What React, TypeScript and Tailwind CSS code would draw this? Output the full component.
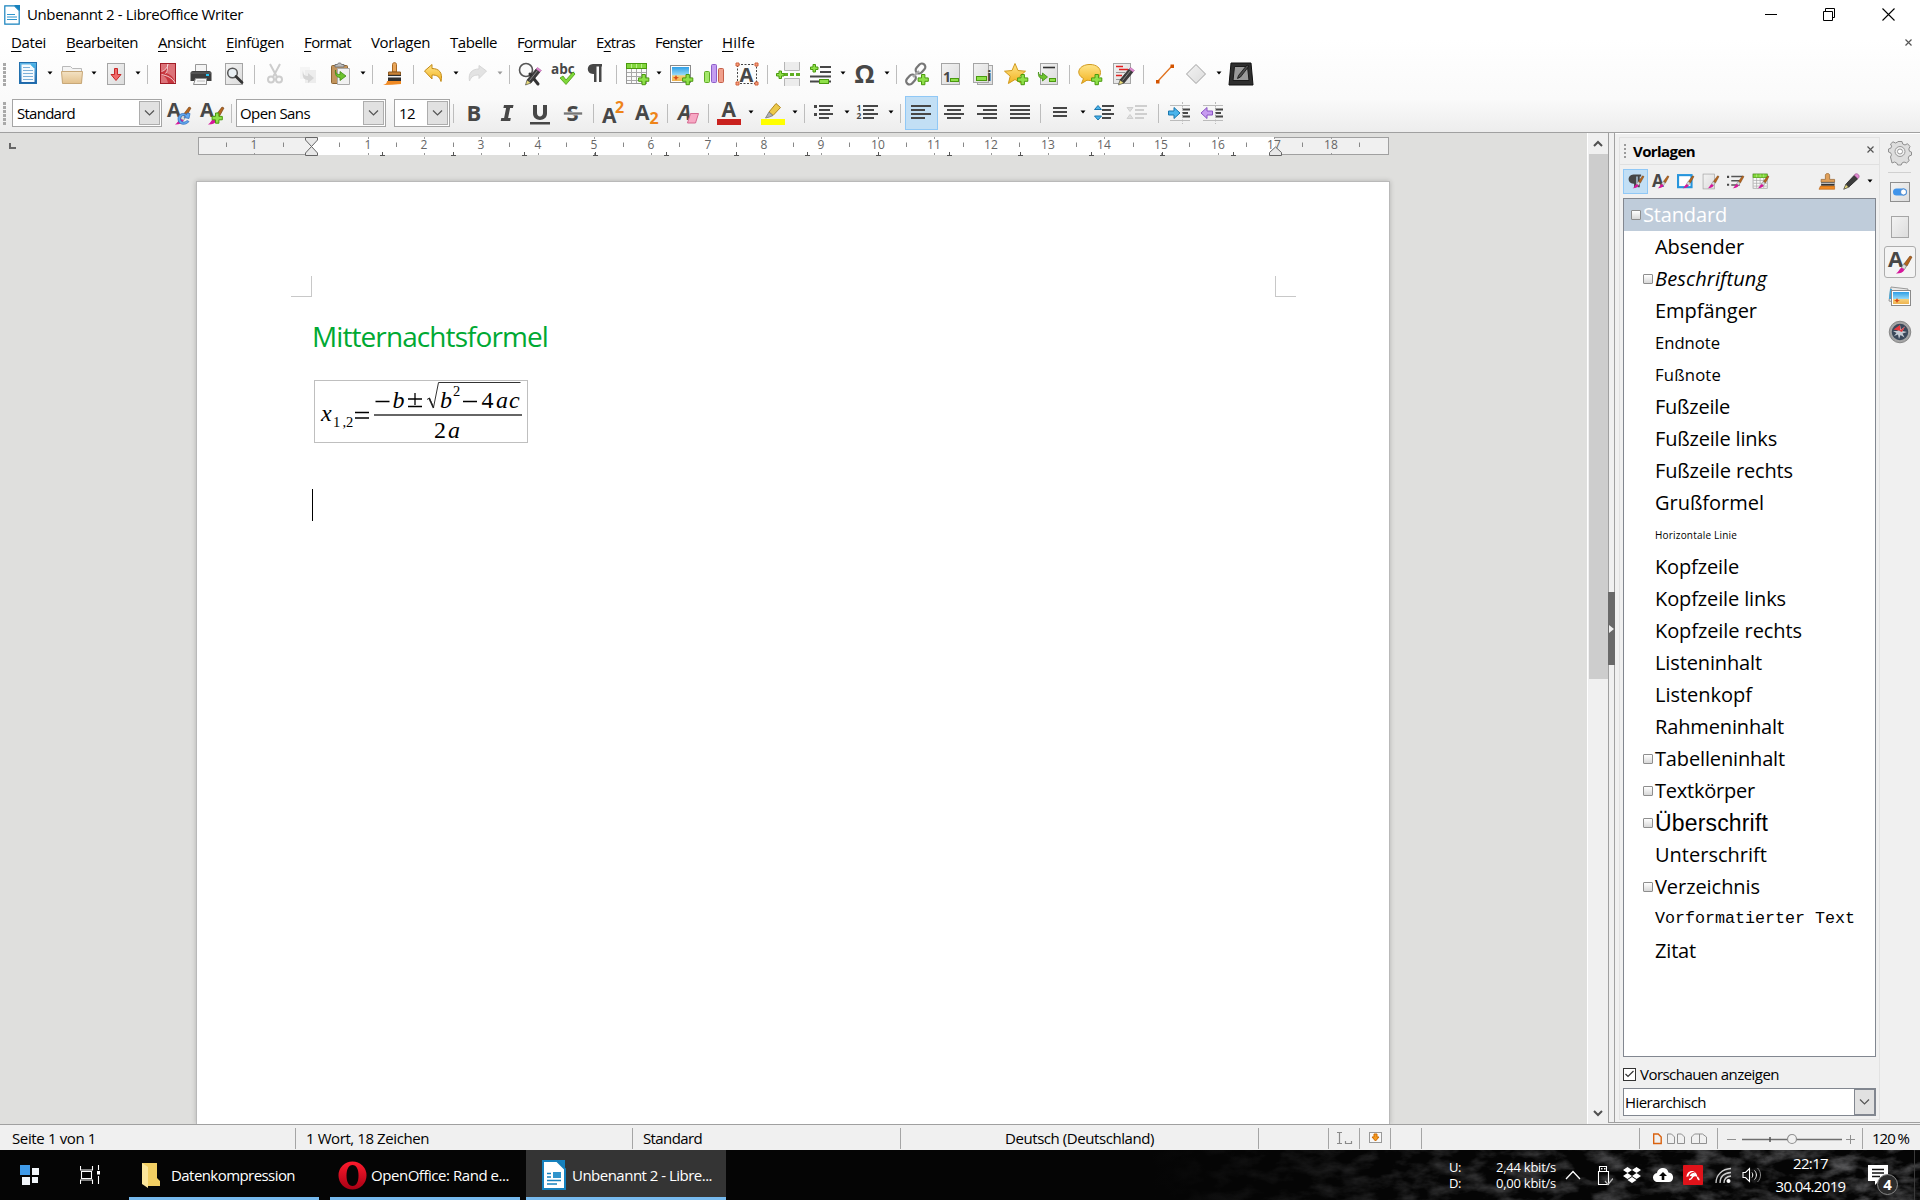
import { useLayoutEffect, useRef } from "react";
import type { ReactNode } from "react";
import clsx from "clsx";

/* ---------- text ---------- */

// Single line label that tracks itself to an exact width
function Fit({ w, className, children }: { w: number; className?: string; children: ReactNode }) {
    const ref = useRef<HTMLSpanElement>(null);

    useLayoutEffect(() => {
        const el = ref.current;
        if (!el) return;
        el.style.letterSpacing = "0px";
        const n = (el.textContent ?? "").length || 1;
        el.style.letterSpacing = `${(w - el.getBoundingClientRect().width) / n}px`;
    }, [w]);

    return (
        <span ref={ref} className={clsx("inline-block whitespace-pre", className)}>
            {children}
        </span>
    );
}

/* ---------- icon parts ---------- */

function Ico({ children, s = 24 }: { children: ReactNode; s?: number }) {
    return (
        <svg width={s} height={s} viewBox="0 0 24 24" fill="none" className="shrink-0 overflow-visible">
            {children}
        </svg>
    );
}

const Plus = ({ x, y }: { x: number; y: number }) => (
    <path transform={`translate(${x} ${y})`} d="M4 .5h3.400v3.400h3.400v3.400H7.400v3.400H4V7.300H.6V3.900H4z" fill="#8fe04a" stroke="#4a9a0e" />
);

const Letter = ({ x, y, size, children, fill = "#474747", italic = false }: { x: number; y: number; size: number; children: string; fill?: string; italic?: boolean }) => (
    <text x={x} y={y} fontSize={size} fontWeight={700} fontFamily="Open Sans, sans-serif" fontStyle={italic ? "italic" : "normal"} fill={fill}>
        {children}
    </text>
);

// Small paint brush laid over the style icons
const Brush = ({ x = 0, y = 0 }: { x?: number; y?: number }) => (
    <g transform={`translate(${x} ${y})`}>
        <path d="M22 4l2 1-5 9-3-2z" fill="#b5651d" stroke="#6b3a10" strokeWidth=".6" />
        <path d="M15.500 12l3 2-2 3.500-3-2z" fill="#ddd" stroke="#777" strokeWidth=".7" />
        <path d="M13.500 15.500l3 2.200c-1.500 3-5 4-8.500 3.800 2.500-1 3-4.500 5.500-6z" fill="#d6179b" />
    </g>
);

const Lines = ({ x = 2, ws, y = 5, gap = 4, color = "#474747" }: { x?: number; ws: number[]; y?: number; gap?: number; color?: string }) => (
    <>
        {ws.map((w, i) => (
            <rect key={i} x={x} y={y + i * gap} width={w} height="2" fill={color} />
        ))}
    </>
);

const Sheet = ({ x = 3, y = 1, w = 18, h = 22 }: { x?: number; y?: number; w?: number; h?: number }) => (
    <rect x={x + 0.5} y={y + 0.5} width={w - 1} height={h - 1} fill="url(#sheet)" stroke="#a5a5a5" />
);

const Grid = () => (
    <>
        <rect x="1.500" y="1.500" width="20" height="20" fill="#fafafa" stroke="#999" />
        <path d="M2 10.500h19M2 14.500h19M2 18.500h19M6.500 6v15M11.500 6v15M16.500 6v15" stroke="#a8a8a8" />
        <rect x="1.500" y="1.500" width="20" height="5" fill="#82d63c" stroke="#4a9a0e" />
        <path d="M6.500 2v4M11.500 2v4M16.500 2v4" stroke="#b9f08b" />
    </>
);

const Pencil = () => (
    <g>
        <path d="M9 18l9-11 4 3-9 11z" fill="#3c3c3c" stroke="#1e1e1e" strokeWidth=".6" />
        <path d="M9 18l4 3-5.500 2z" fill="#eadc7a" stroke="#333" strokeWidth=".6" />
        <path d="M18 7l1.500-1.500 4 3L22 10z" fill="#e28bd2" stroke="#9a4f8c" strokeWidth=".5" />
        <path d="M11.500 18.500l8-10" stroke="#8a8a8a" />
    </g>
);

function Defs() {
    return (
        <svg width="0" height="0" className="absolute">
            <defs>
                <linearGradient id="sheet" x1="0" y1="0" x2="1" y2="1">
                    <stop offset="0" stopColor="#f3f3f3" />
                    <stop offset="1" stopColor="#dcdcdc" />
                </linearGradient>
                <linearGradient id="blue" x1="0" y1="0" x2="0" y2="1">
                    <stop offset="0" stopColor="#5db7e8" />
                    <stop offset="1" stopColor="#1d62a8" />
                </linearGradient>
                <linearGradient id="tan" x1="0" y1="0" x2="0" y2="1">
                    <stop offset="0" stopColor="#f3e2c4" />
                    <stop offset="1" stopColor="#e3c18c" />
                </linearGradient>
                <linearGradient id="gold" x1="0" y1="0" x2="0" y2="1">
                    <stop offset="0" stopColor="#ffe58a" />
                    <stop offset="1" stopColor="#f2b21f" />
                </linearGradient>
                <linearGradient id="sky" x1="0" y1="0" x2="0" y2="1">
                    <stop offset="0" stopColor="#2f9fe6" />
                    <stop offset=".6" stopColor="#9adcf7" />
                    <stop offset=".61" stopColor="#f5cf7a" />
                    <stop offset="1" stopColor="#eeb44f" />
                </linearGradient>
                <linearGradient id="opera" x1="0" y1="0" x2="0" y2="1">
                    <stop offset="0" stopColor="#ff1b2d" />
                    <stop offset="1" stopColor="#a70014" />
                </linearGradient>
            </defs>
        </svg>
    );
}

/* ---------- standard toolbar icons ---------- */

const icons: Record<string, ReactNode> = {
    new: (
        <Ico>
            <rect x="3.500" y=".5" width="17" height="21" fill="url(#blue)" stroke="#2170ae" />
            <path d="M5.500 2.500h9l4 4v13.500h-13z" fill="#f4fafe" />
            <path d="M14.500 2.500h4v4z" fill="#3fb2e6" />
            <path d="M7 5.500h7M7 8.500h10M7 11.500h10M7 14.500h10M7 17.500h10" stroke="#7bb0d8" strokeWidth="1.200" />
        </Ico>
    ),
    open: (
        <Ico>
            <path d="M2.500 21V4.500h8l2 2h9V21z" fill="#f4f4f4" stroke="#b9b9b9" />
            <path d="M1.500 9.500h21l-1 12h-19z" fill="url(#tan)" stroke="#c8a878" />
        </Ico>
    ),
    save: (
        <Ico>
            <Sheet x={3} y={1} w={18} h={22} />
            <path d="M10.500 6.500h3v6h3.500l-5 6-5-6h3.500z" fill="#ef6a6a" stroke="#c62828" />
        </Ico>
    ),
    pdf: (
        <Ico>
            <rect x="4.500" y="1.500" width="15" height="20" fill="#c8373f" stroke="#a11d27" />
            <path d="M5 2h6c0 4-2 6-6 7zM13 2h6v19c-1-5-3-8-9-10 2-2 3-5 3-9zM5 13c4 1 6 3 7 8H5z" fill="#dd7379" />
            <path d="M5.500 9.500C9 8.500 11.500 6 12 2M5.500 12.500c5 1 11 3 13.500 8.500M12 2c-.5 4 0 7-2.500 9.500" stroke="#fff" strokeWidth=".9" opacity=".85" />
        </Ico>
    ),
    print: (
        <Ico>
            <path d="M6.500 10V2.500h11V10" fill="#f4f4f4" stroke="#999" />
            <path d="M4 9h16c2 0 2.500 1.500 2.500 3v7h-21v-7c0-1.500.5-3 2.500-3z" fill="#3d3d3d" />
            <path d="M1.500 11h21" stroke="#6a6a6a" />
            <rect x="17" y="12" width="3" height="2" fill="#25c4f4" />
            <path d="M6.500 16.500h11v6h-13z" fill="#f7f7f7" stroke="#8d8d8d" />
            <path d="M8 19h8" stroke="#bbb" />
        </Ico>
    ),
    preview: (
        <Ico>
            <Sheet x={3} y={1} w={18} h={22} />
            <circle cx="10.500" cy="11" r="4.800" fill="#e9eff3" stroke="#555" strokeWidth="1.500" />
            <path d="M14 14.500l6 6" stroke="#333" strokeWidth="2.800" strokeLinecap="round" />
        </Ico>
    ),
    cut: (
        <Ico>
            <g stroke="#cdcdcd" strokeWidth="2">
                <path d="M7 2l7 13M17 2l-7 13" />
                <circle cx="8" cy="17.500" r="3" />
                <circle cx="16" cy="17.500" r="3" />
            </g>
        </Ico>
    ),
    copy: (
        <Ico>
            <path d="M4 5h10v12H4z" fill="#f5f5f5" />
            <path d="M9 8h11v13H9z" fill="#ededed" />
            <path d="M7 8c0 5 2 6 5 6v-3l6 5-6 5v-3c-5 0-6-4-5-10z" fill="#d6d6d6" />
        </Ico>
    ),
    paste: (
        <Ico>
            <rect x="2.500" y="3.500" width="16" height="18" rx="1" fill="#c2945c" stroke="#8c6432" />
            <path d="M6 5V2.500h2.500c0-2 4-2 4 0H15V5z" fill="#bdbdbd" stroke="#777" />
            <path d="M8.500 6.500h12v16h-12z" fill="#f1f1f1" stroke="#aaa" />
            <path d="M6.500 8c0 4 2 4.500 4.500 4.500V9.500l6 4.500-6 4.500v-3C7 15.500 6 12 6.500 8z" fill="#6cc32e" stroke="#3f8a12" strokeWidth=".8" />
        </Ico>
    ),
    clone: (
        <Ico>
            <path d="M11.500 10V2.500c0-2.500 4-2.500 4 0V10z" fill="#e8a55a" stroke="#a8661f" />
            <path d="M7.500 10h12v3h-12z" fill="#c98237" stroke="#8c5a22" />
            <path d="M7 13h13v6H7z" fill="#2f2f2f" />
            <path d="M7 14h13v1.500H7z" fill="#ececec" />
            <path d="M6 19h14v3c-6 .5-12 1-18 1 3-.8 4-2 4-4z" fill="#f08a24" />
        </Ico>
    ),
    undo: (
        <Ico>
            <path d="M2.500 9l7.500-6.500v4c7 0 11 4 9 13-1.500-5-4-6.500-9-6.500v4z" fill="url(#gold)" stroke="#c38a17" />
        </Ico>
    ),
    redo: (
        <Ico>
            <path d="M20.500 9L13 3.500v3.500C6 7 2 11 3.500 19c2-5 4.500-6 9.500-6v3.500z" fill="#e3e3e3" stroke="#d6d6d6" />
        </Ico>
    ),
    find: (
        <Ico>
            <circle cx="8" cy="8" r="6.500" fill="#fafafa" stroke="#555" strokeWidth="1.600" />
            <path d="M12 12l8 10" stroke="#333" strokeWidth="3" strokeLinecap="round" />
            <Pencil />
        </Ico>
    ),
    spell: (
        <Ico>
            <Letter x={0} y={12} size={13.5}>abc</Letter>
            <path d="M9 16l3-2 3 4 7-8 2 2-9 10.500z" fill="#7fd83a" stroke="#4a9a0e" strokeWidth=".8" />
        </Ico>
    ),
    pilcrow: (
        <Ico>
            <path d="M18 2H9C2 2 2 12 9 12h1v8h2.500V4.500H15V20h2.500V4.500H18z" fill="#474747" />
        </Ico>
    ),
    table: (
        <Ico>
            <Grid />
            <Plus x={13} y={12} />
        </Ico>
    ),
    image: (
        <Ico>
            <rect x="1.500" y="3.500" width="20" height="17" fill="#fff" stroke="#8a8a8a" />
            <rect x="3" y="5" width="17" height="14" fill="url(#sky)" />
            <path d="M7 13l1 2 2 .5-2 1-1 2-1-2-2-1 2-.5z" fill="#d84a16" />
            <Plus x={13} y={12} />
        </Ico>
    ),
    chart: (
        <Ico>
            <rect x="2.500" y="9.500" width="5" height="11" rx="1" fill="#a4e86a" stroke="#5faa25" />
            <rect x="9.500" y="2.500" width="5" height="18" rx="1" fill="#c49df0" stroke="#8d5fc9" />
            <rect x="16.500" y="6.500" width="5" height="14" rx="1" fill="#f0a08c" stroke="#c5604a" />
        </Ico>
    ),
    frame: (
        <Ico>
            <rect x="2.500" y="2.500" width="19" height="19" stroke="#444" strokeDasharray="2 1.500" />
            <Letter x={4.5} y={19.5} size={20}>A</Letter>
            <path d="M1 1h3v3H1zM20 1h3v3h-3zM1 20h3v3H1zM20 20h3v3h-3z" fill="#f7a080" stroke="#d2603a" />
        </Ico>
    ),
    pagebreak: (
        <Ico>
            <path d="M8.500 0v8.500h15V0M8.500 24v-7.500h15V24" fill="#ececec" stroke="#b5b5b5" />
            <path d="M8 12.500h16" stroke="#5fae22" strokeWidth="3" strokeDasharray="4 2" />
            <path d="M3 9h2.500v2.500H8V14H5.500v2.500H3V14H.5v-2.500H3z" fill="#8fe04a" stroke="#4a9a0e" />
        </Ico>
    ),
    field: (
        <Ico>
            <Lines x={11} ws={[11, 11]} y={4} gap={5} />
            <path d="M1 14.500h21M1 19.500h21" stroke="#474747" strokeWidth="2" />
            <path d="M4 2.500h2.500V5H9v2.500H6.500V10H4V7.500H1.500V5H4z" fill="#8fe04a" stroke="#4a9a0e" />
            <rect x="10.500" y="17.500" width="9" height="4" fill="#8fe04a" stroke="#4a9a0e" />
        </Ico>
    ),
    omega: (
        <Ico>
            <Letter x={1.5} y={21} size={25.5}>Ω</Letter>
        </Ico>
    ),
    link: (
        <Ico>
            <g stroke="#777" strokeWidth="2.200">
                <rect x="12" y="1" width="7" height="11" rx="3.500" transform="rotate(42 15.500 6.500)" />
                <rect x="2.500" y="12" width="7" height="11" rx="3.500" transform="rotate(42 6 17.500)" />
                <path d="M8 15l6-6" stroke="#aaa" />
            </g>
            <Plus x={12.5} y={12} />
        </Ico>
    ),
    footnote: (
        <Ico>
            <Sheet x={3} y={1} w={19} h={22} />
            <Letter x={5} y={20} size={14}>1</Letter>
            <rect x="12.500" y="16.500" width="8" height="3" fill="#8fe04a" stroke="#4a9a0e" />
        </Ico>
    ),
    endnote: (
        <Ico>
            <Sheet x={6} y={3} w={16} h={20} />
            <Sheet x={2} y={1} w={16} h={20} />
            <rect x="5.500" y="14.500" width="10" height="4" fill="#8fe04a" stroke="#4a9a0e" />
            <Letter x={16} y={18.5} size={15}>i</Letter>
        </Ico>
    ),
    bookmark: (
        <Ico>
            <path d="M11 1.500l3 7 7.500.7-5.700 5 1.800 7.300-6.600-4-6.600 4 1.800-7.300-5.700-5 7.500-.7z" fill="url(#gold)" stroke="#d19a1e" />
            <Plus x={13} y={12} />
        </Ico>
    ),
    crossref: (
        <Ico>
            <Sheet x={3} y={1} w={18} h={22} />
            <path d="M6 5.500h12" stroke="#333" strokeWidth="1.600" />
            <path d="M1.500 10c0 3 2 3.500 4 3.500V11l5 4-5 4v-2.500C2 16.500 1 13.500 1.500 10z" fill="#6cc32e" stroke="#3f8a12" strokeWidth=".8" />
            <rect x="12.500" y="16.500" width="6" height="3" fill="#8fe04a" stroke="#4a9a0e" />
        </Ico>
    ),
    comment: (
        <Ico>
            <path d="M12 2.500c14 0 14 16 0 16-1 0-2 0-3-.3L3.500 21.500l2-5C-3 12 .5 2.500 12 2.500z" fill="url(#gold)" stroke="#d19a1e" />
            <Plus x={13} y={12} />
        </Ico>
    ),
    track: (
        <Ico>
            <Sheet x={2} y={1} w={18} h={21} />
            <path d="M5 4.500h7M8 7.500h9M5 13.500h6" stroke="#e32020" strokeWidth="1.600" />
            <path d="M5 10.500h9M5 17.500h5" stroke="#999" />
            <Pencil />
        </Ico>
    ),
    line: (
        <Ico>
            <path d="M6 19L20 4" stroke="#e0711c" strokeWidth="1.300" />
            <path d="M4 18h3.500v3.500H4zM18.500 2.500H22V6h-3.500z" fill="#d35400" />
        </Ico>
    ),
    shape: (
        <Ico>
            <path d="M11 2.500l9.500 9.500-9.500 9.500L1.500 12z" fill="url(#sheet)" stroke="#a0a0a0" />
        </Ico>
    ),
    draw: (
        <Ico>
            <path d="M2 1h20l2 22H0z" fill="#2e2e2e" stroke="#111" />
            <path d="M5.500 4.500h13l1.500 14H4z" fill="#9a9a9a" stroke="#1a1a1a" />
            <path d="M18 3l2 1-8.500 11-3 1.500 1-3z" fill="#4b4b4b" stroke="#111" strokeWidth=".8" />
        </Ico>
    ),

    /* ---------- formatting toolbar icons ---------- */
    styleUpdate: (
        <Ico>
            <Letter x={0} y={16} size={20}>A</Letter>
            <Brush x={0} y={2} />
            <path d="M20 12l3 .5-1 5-5-1 1.500-1.500c-3-1.500-5 .5-5 3 0 3.500 4.500 4 6.500 1.500l2 1c-3 4.500-11 3.500-11-2.500 0-5 5-7 8.500-4.500z" fill="#62a8f0" stroke="#2b67b8" strokeWidth=".7" />
        </Ico>
    ),
    styleNew: (
        <Ico>
            <Letter x={0} y={16} size={20}>A</Letter>
            <Brush x={0} y={2} />
            <Plus x={11.5} y={11.5} />
        </Ico>
    ),
    bold: (
        <Ico>
            <Letter x={4.5} y={20} size={22}>B</Letter>
        </Ico>
    ),
    italic: (
        <Ico>
            <path d="M9 4h9.500l-.6 3h-2.800L13.100 17h2.700l-.6 3H5.700l.6-3h2.800L11.100 7H8.400z" fill="#474747" />
        </Ico>
    ),
    underline: (
        <Ico>
            <path d="M5 4h4v8c0 4.500 6 4.500 6 0V4h4v8.500c0 8.500-14 8.500-14 0zM2 21h20v2.500H2z" fill="#474747" />
        </Ico>
    ),
    strike: (
        <Ico>
            <Letter x={5.5} y={20} size={22}>S</Letter>
            <path d="M2.500 11h19v3h-19z" fill="#777" stroke="#fff" strokeWidth=".6" />
        </Ico>
    ),
    sup: (
        <Ico>
            <Letter x={0} y={22} size={21}>A</Letter>
            <Letter x={13} y={11.5} size={16} fill="#ee8419">2</Letter>
        </Ico>
    ),
    sub: (
        <Ico>
            <Letter x={0} y={19} size={21}>A</Letter>
            <Letter x={14.5} y={22.5} size={16} fill="#ee8419">2</Letter>
        </Ico>
    ),
    clear: (
        <Ico>
            <Letter x={2} y={19} size={21} italic>A</Letter>
            <path d="M14.500 12.500h8l-3 9.500h-8z" fill="#f7a8c4" stroke="#d4688f" />
        </Ico>
    ),
    fontColor: (
        <Ico>
            <Letter x={4.5} y={16} size={21}>A</Letter>
            <rect x="0" y="18" width="24" height="6" fill="#c9211e" />
        </Ico>
    ),
    highlight: (
        <Ico>
            <path d="M15 2.500l4.500 4-7.500 8-4-3.500z" fill="#ecc94b" stroke="#b5891d" />
            <path d="M8 11l4 3.500-3.500 1.500-4 1z" fill="#b0b0b0" stroke="#777" strokeWidth=".8" />
            <rect x="0" y="18" width="24" height="6" fill="#ffff00" />
        </Ico>
    ),
    bullets: (
        <Ico>
            <Lines x={6} ws={[14, 11, 14, 10]} y={4} gap={4} />
            <path d="M1 4h3v3H1zM1 12h3v3H1z" fill="#474747" />
        </Ico>
    ),
    numbers: (
        <Ico>
            <Lines x={6} ws={[15, 11, 15, 11]} y={4} gap={4} />
            <Letter x={-0.5} y={9.5} size={8.5}>1</Letter>
            <Letter x={-0.5} y={18} size={8.5}>2</Letter>
        </Ico>
    ),
    left: (
        <Ico>
            <Lines ws={[20, 14, 20, 14]} y={4} />
        </Ico>
    ),
    center: (
        <Ico>
            <path d="M2 5h20M5 9h14M2 13h20M5 17h14" stroke="#474747" strokeWidth="2" />
        </Ico>
    ),
    right: (
        <Ico>
            <path d="M2 5h20M8 9h14M2 13h20M8 17h14" stroke="#474747" strokeWidth="2" />
        </Ico>
    ),
    justify: (
        <Ico>
            <Lines ws={[20, 20, 20, 20]} y={4} />
        </Ico>
    ),
    spacing: (
        <Ico>
            <Lines x={4} ws={[14, 14, 14]} y={6} gap={4} />
        </Ico>
    ),
    moreSpace: (
        <Ico>
            <Lines x={9} ws={[12, 9, 12, 9]} y={4} />
            <path d="M5 4.500l3.500 4h-7zM5 19l3.500-4h-7z" fill="#4ab4ec" stroke="#1b77ad" />
        </Ico>
    ),
    lessSpace: (
        <Ico>
            <Lines x={9} ws={[12, 9, 12, 9]} y={4} color="#cfcfcf" />
            <path d="M4 10.500l3-4H1zM4 13.500l3 4H1z" fill="#dedede" stroke="#cfcfcf" />
        </Ico>
    ),
    indent: (
        <Ico>
            <path d="M3 4.500h20M3 19.500h20" stroke="#bbb" />
            <path d="M15 8.500h8M15 12h6M15 15.500h8" stroke="#474747" strokeWidth="1.800" />
            <path d="M15.500 1v22" stroke="#bbb" strokeDasharray="2 1.500" />
            <path d="M1.500 10h5.500V6.500l6 5.500-6 5.500V14H1.500z" fill="#4ab4ec" stroke="#1b77ad" />
        </Ico>
    ),
    outdent: (
        <Ico>
            <path d="M3 4.500h20M3 19.500h20" stroke="#bbb" />
            <path d="M15 8.500h8M15 12h6M15 15.500h8" stroke="#474747" strokeWidth="1.800" />
            <path d="M15.500 1v22" stroke="#bbb" strokeDasharray="2 1.500" />
            <path d="M12.500 10H7V6.500L1 12l6 5.500V14h5.500z" fill="#c79bf0" stroke="#8a55c4" />
        </Ico>
    ),
};

// "|" is a separator, "v" a drop-down arrow, "w" a disabled arrow
const STANDARD_BAR = "new v open v save v | pdf print preview | cut copy paste v | clone | undo v redo w | find spell pilcrow | table v image chart frame | pagebreak field v omega v | link footnote endnote bookmark crossref | comment track | line shape v draw".split(" ");
const FORMAT_BAR = "| bold italic underline strike | sup sub | clear | fontColor v highlight v | bullets v numbers v | left center right justify | spacing v moreSpace lessSpace | indent outdent".split(" ");

function BarItems({ items }: { items: string[] }) {
    return (
        <>
            {items.map((it, i) => {
                if (it === "|") {
                    return (
                        <div key={i} className="flex w-2 shrink-0 justify-center">
                            <div className="h-[19px] w-px bg-[#bdbdbd]" />
                        </div>
                    );
                }
                if (it === "v" || it === "w") {
                    return (
                        <div key={i} className="flex w-[11px] shrink-0 justify-center">
                            <svg width="6" height="4" className="-mt-0.5">
                                <path d="M.5 .5h5L3 3.500z" fill={it === "v" ? "#000" : "#999"} />
                            </svg>
                        </div>
                    );
                }
                return (
                    <div
                        key={i}
                        className={clsx("flex h-[34px] w-[33px] shrink-0 items-center justify-center", it === "left" && "border border-[#90c8f6] bg-[#c2dff5]")}
                    >
                        {icons[it]}
                    </div>
                );
            })}
        </>
    );
}

const Grip = () => (
    <div className="flex w-[3px] shrink-0 flex-col gap-px">
        {Array.from({ length: 6 }, (_, i) => (
            <div key={i} className="h-[3px] bg-[#a9a9a9]" />
        ))}
    </div>
);

function Combo({ value, tw, className, dark }: { value: string; tw: number; className: string; dark?: boolean }) {
    return (
        <div className={clsx("flex h-7 shrink-0 items-center border bg-white text-[15px]", dark ? "border-[#828790]" : "border-[#a5a5a5]", className)}>
            <Fit w={tw}>{value}</Fit>
            <div className={clsx("ml-auto flex w-[21px] items-center justify-center border bg-[#e1e1e1]", dark ? "h-[26px] border-[#828790]" : "mr-px h-6 border-[#adadad]")}>
                <svg width="11" height="6" fill="none">
                    <path d="M1 .5l4.500 4.500L10 .5" stroke="#555" strokeWidth="1.200" />
                </svg>
            </div>
        </div>
    );
}

/* ---------- window header ---------- */

// [before, mnemonic, after, width]
const MENU: [string, string, string, number][] = [
    ["", "D", "atei", 35],
    ["", "B", "earbeiten", 72],
    ["", "A", "nsicht", 48],
    ["", "E", "infügen", 58],
    ["", "F", "ormat", 47],
    ["Vo", "r", "lagen", 59],
    ["T", "a", "belle", 47],
    ["F", "o", "rmular", 59],
    ["E", "x", "tras", 39],
    ["Fen", "s", "ter", 47],
    ["", "H", "ilfe", 33],
];

function WriterIcon({ w, h }: { w: number; h: number }) {
    return (
        <svg width={w} height={h} viewBox="0 0 16 20" fill="none" preserveAspectRatio="none">
            <path d="M.8.8h9.700l4.700 4.700v13.700H.8z" fill="#fff" stroke="#1681bd" strokeWidth="1.200" />
            <path d="M10 0h6v6z" fill="#1681bd" />
            <path d="M3 9.500h8M3 12h10M3 14.500h10" stroke="#2f94cc" strokeWidth="1.200" />
        </svg>
    );
}

function Header() {
    return (
        <header className="flex h-[133px] shrink-0 flex-col border-b border-[#a0a0a0] bg-gradient-to-b from-white from-30% via-[#fafafa] via-75% to-[#ededed]">
            <div className="flex h-[29px] items-center pl-1">
                <WriterIcon w={16} h={20} />
                <Fit w={216} className="ml-[7px] text-[15px] text-black">Unbenannt 2 - LibreOffice Writer</Fit>
                <div className="ml-auto flex items-center gap-[46px] pr-[25px]">
                    <svg width="13" height="13">
                        <path d="M1 6.500h12" stroke="#000" />
                    </svg>
                    <svg width="13" height="13" fill="none">
                        <path d="M.5 3.500h9v9h-9zM2.500 3V.5h9v9H10" stroke="#000" />
                    </svg>
                    <svg width="13" height="13">
                        <path d="M.5.5l12 12M12.500.5l-12 12" stroke="#000" strokeWidth="1.100" />
                    </svg>
                </div>
            </div>
            <nav className="flex h-[28px] items-center gap-5 pb-0.5 pl-[11px] text-[15px] text-black">
                {MENU.map(([a, k, b, w]) => (
                    <Fit key={a + k + b} w={w}>
                        {a}
                        <span className="underline decoration-1 underline-offset-[3px]">{k}</span>
                        {b}
                    </Fit>
                ))}
                <svg width="7" height="7" className="mr-[8px] ml-auto">
                    <path d="M.5.500l6 6M6.500.5l-6 6" stroke="#555" strokeWidth="1.200" />
                </svg>
            </nav>
            <div className="flex h-[34px] items-center pl-[3px]">
                <Grip />
                <div className="ml-[5.5px] flex items-center">
                    <BarItems items={STANDARD_BAR} />
                </div>
            </div>
            <div className="mt-[3px] flex h-[38px] items-center pl-[3px]">
                <Grip />
                <Combo value="Standard" tw={58} className="ml-1.5 w-[150px] pl-1" />
                <div className="ml-[5px] mr-[7px] flex gap-[9px]">
                    {icons.styleUpdate}
                    {icons.styleNew}
                </div>
                <div className="mr-1 h-[19px] w-px bg-[#bdbdbd]" />
                <Combo value="Open Sans" tw={70} className="w-[150px] pl-[3px]" />
                <Combo value="12" tw={16} className="ml-2 w-14 pl-1" />
                <div className="-ml-[0.5px] flex items-center">
                    <BarItems items={FORMAT_BAR} />
                </div>
            </div>
        </header>
    );
}

/* ---------- document ---------- */

const CM = 56.65;

function Ruler() {
    const at = (cm: number) => Math.round(113.1 + cm * CM) + 0.5;
    const whole = Array.from({ length: 20 }, (_, i) => i - 1).filter((n) => n !== 0);
    const halves = Array.from({ length: 21 }, (_, i) => i - 1.5);
    const tabs = Array.from({ length: 13 }, (_, i) => (i + 1) * 1.2515);

    return (
        <svg width="1193" height="20" fill="none">
            <rect x=".5" y=".5" width="1190" height="17" fill="#f0f0f0" stroke="#a0a0a0" />
            <rect x="113" y="0" width="964" height="18" fill="#fff" />
            {halves.map((h) => (
                <path key={h} d={`M${at(h)} 5.500v4.500`} stroke="#888" />
            ))}
            {whole.map((n) => (
                <g key={n}>
                    <path d={`M${at(n)} 0v2M${at(n)} 16v2`} stroke="#999" />
                    <text x={at(n) - 0.6} y="12" textAnchor="middle" fontSize="12" fontFamily="Open Sans, sans-serif" fill="#666">
                        {Math.abs(n)}
                    </text>
                </g>
            ))}
            {tabs.map((t) => (
                <path key={t} d={`M${at(t)} 15v3M${at(t) - 2.5} 18.500h5`} stroke="#555" />
            ))}
            <path d="M107.500 0.500h12v2.500l-6 6.500 6 6.500v2.500h-12v-2.500l6-6.500-6-6.500z" fill="#e8e8e8" stroke="#666" />
            <path d="M1071.500 18.500h12v-3l-6-5.500-6 5.500z" fill="#e8e8e8" stroke="#666" />
        </svg>
    );
}

function Formula() {
    return (
        <svg width="212" height="61" fill="#000" fontFamily="Liberation Serif, serif" fontSize="24">
            <g fontStyle="italic">
                <text x="6" y="40">x</text>
                <text x="77.500" y="27">b</text>
                <text x="125" y="27">b</text>
                <text x="181" y="27">a</text>
                <text x="194" y="27">c</text>
                <text x="133" y="57">a</text>
            </g>
            <text x="18" y="46" fontSize="14.500">1</text>
            <text x="27.500" y="46" fontSize="14.500">,</text>
            <text x="31" y="46" fontSize="14.500">2</text>
            <text x="138" y="14.500" fontSize="14.500">2</text>
            <text x="166.500" y="27">4</text>
            <text x="119" y="57">2</text>
            <path d="M40 31.500h14M40 37h14M60.500 20.500h14M148 20.500h14M93 25.500h14M93 18h14M100 12v12" stroke="#000" strokeWidth="1.300" />
            <path d="M59 34h148" stroke="#333" strokeWidth="1.500" />
            <path d="M112 18.500l2.500-1.500 4 9.500L123.500 1.500h82" stroke="#333" fill="none" />
            <path d="M114 17l4.500 10" stroke="#222" strokeWidth="1.600" />
        </svg>
    );
}

function Document() {
    return (
        <div className="flex min-w-0 flex-1 flex-col overflow-hidden bg-[#dfdfdd]">
            <div className="flex h-[48px] shrink-0 items-start pt-1">
                <div className="mt-1.5 ml-[9px] h-1.5 w-[7px] border-b-2 border-l-2 border-[#666]" />
                <div className="ml-[182px]">
                    <Ruler />
                </div>
            </div>
            <div className="ml-[196px] h-[943px] w-[1194px] shrink-0 border border-b-0 border-[#b9b9b9] bg-white shadow-[0_0_5px_rgba(0,0,0,0.2)]">
                <div className="mt-[94px] mr-[93px] ml-[94px] flex justify-between">
                    <div className="h-[21px] w-[21px] border-r border-b border-[#c8c8c8]" />
                    <div className="h-[21px] w-[21px] border-b border-l border-[#c8c8c8]" />
                </div>
                <h1 className="mt-[19px] ml-[115px] h-[41px] text-[28px] leading-[41px] text-[#00a933]">
                    <Fit w={236}>Mitternachtsformel</Fit>
                </h1>
                <div className="mt-[23px] ml-[117px] h-[63px] w-[214px] border border-[#bfbfbf]">
                    <Formula />
                </div>
                <div className="mt-[46px] ml-[115px] h-8 w-px bg-black" />
            </div>
        </div>
    );
}

function ScrollBar() {
    return (
        <div className="flex w-[21px] shrink-0 flex-col items-center border-l border-white bg-[#f0f0f0]">
            <div className="flex h-[21px] items-center justify-center">
                <svg width="10" height="7" fill="none">
                    <path d="M1 6l4-4 4 4" stroke="#505050" strokeWidth="2" />
                </svg>
            </div>
            <div className="h-[525px] w-[19px] bg-[#cdcdcd]" />
            <div className="mt-auto flex h-[21px] items-center justify-center">
                <svg width="10" height="7" fill="none">
                    <path d="M1 1l4 4 4-4" stroke="#505050" strokeWidth="2" />
                </svg>
            </div>
        </div>
    );
}

/* ---------- sidebar ---------- */

type Style = { name: string; w: number; box?: boolean; top?: boolean; cls?: string };

const STYLES: Style[] = [
    { name: "Standard", w: 84, box: true, top: true },
    { name: "Absender", w: 89 },
    { name: "Beschriftung", w: 112, box: true, cls: "italic" },
    { name: "Empfänger", w: 102 },
    { name: "Endnote", w: 65, cls: "text-[16.7px]" },
    { name: "Fußnote", w: 66, cls: "text-[16.7px]" },
    { name: "Fußzeile", w: 75 },
    { name: "Fußzeile links", w: 122 },
    { name: "Fußzeile rechts", w: 138 },
    { name: "Grußformel", w: 109 },
    { name: "Horizontale Linie", w: 82, cls: "text-[10px]" },
    { name: "Kopfzeile", w: 84 },
    { name: "Kopfzeile links", w: 131 },
    { name: "Kopfzeile rechts", w: 147 },
    { name: "Listeninhalt", w: 107 },
    { name: "Listenkopf", w: 97 },
    { name: "Rahmeninhalt", w: 129 },
    { name: "Tabelleninhalt", w: 130, box: true },
    { name: "Textkörper", w: 100, box: true },
    { name: "Überschrift", w: 113, box: true, cls: "font-['Liberation_Sans',sans-serif] text-[23px]" },
    { name: "Unterschrift", w: 112 },
    { name: "Verzeichnis", w: 105, box: true },
    { name: "Vorformatierter Text", w: 200, cls: "font-['Liberation_Mono',monospace] text-[16.7px]" },
    { name: "Zitat", w: 41 },
];

const TreeBox = () => (
    <div className="h-2.5 w-2.5 shrink-0 rounded-[1px] border border-[#8e8e8e] bg-gradient-to-b from-white to-[#d8d8d8]" />
);

function StyleList() {
    return (
        <div className="h-[859px] shrink-0 border border-[#828790] bg-white">
            {STYLES.map((s) => (
                <div key={s.name} className={clsx("flex h-8 items-center text-xl", s.top ? "bg-[#bfccda] pl-[7px] text-white" : "pl-[19px] text-black")}>
                    <div className="w-3 shrink-0">{s.box && <TreeBox />}</div>
                    <Fit w={s.w} className={s.cls}>
                        {s.name}
                    </Fit>
                </div>
            ))}
        </div>
    );
}

const STYLE_ICONS: ReactNode[] = [
    <Ico s={17}>
        <path d="M20 2H9C0 2 0 15 9 15h1v5h3V5h2v15h3V5h2z" fill="#474747" />
        <path d="M9 4h4v10H9c-7 0-7-10 0-10z" fill="#474747" />
        <Brush />
    </Ico>,
    <Ico s={17}>
        <Letter x={0} y={20} size={24}>A</Letter>
        <Brush />
    </Ico>,
    <Ico s={17}>
        <rect x="1.500" y="3" width="19" height="17" fill="#fff" stroke="#2795dc" strokeWidth="3" />
        <Brush />
    </Ico>,
    <Ico s={17}>
        <Sheet x={1} y={1} w={17} h={22} />
        <Brush />
    </Ico>,
    <Ico s={17}>
        <path d="M6 5h16M6 11h12M6 17h12" stroke="#555" strokeWidth="2" />
        <path d="M0 4h3v3H0zM0 15h3v3H0z" fill="#474747" />
        <Brush />
    </Ico>,
    <Ico s={17}>
        <Grid />
        <Brush />
    </Ico>,
];

function StylesDeck() {
    return (
        <div className="mt-1 ml-1 flex h-[983px] w-[261px] shrink-0 flex-col border border-[#e2e2e2] bg-[#f0f0f0]">
            <div className="flex h-[27px] shrink-0 items-center border-b border-[#e0e0e0] pl-1">
                <div className="flex w-[2px] flex-col gap-[2px]">
                    {[0, 1, 2, 3].map((i) => (
                        <div key={i} className="h-[2px] bg-[#9a9a9a]" />
                    ))}
                </div>
                <Fit w={62} className="ml-[7px] text-[15px] font-bold text-black">Vorlagen</Fit>
                <svg width="7" height="7" className="mr-[5px] mb-1 ml-auto">
                    <path d="M.5.5l6 6M6.500.5l-6 6" stroke="#555" strokeWidth="1.200" />
                </svg>
            </div>
            <div className="flex h-[33px] shrink-0 items-center pb-px pl-[3px]">
                {STYLE_ICONS.map((icon, i) => (
                    <div key={i} className={clsx("flex h-[25px] w-[25px] items-center justify-center border", i === 0 ? "border-[#90c8f6] bg-[#c2dff5]" : "border-transparent")}>
                        {icon}
                    </div>
                ))}
                <div className="mr-1.5 ml-auto flex items-center gap-[7px]">
                    <Ico s={17}>
                        <path d="M9 9V3c0-3 6-3 6 0v6h7v4H3V9z" fill="#e0a05a" stroke="#95622a" />
                        <path d="M3 13h19v5H3z" fill="#333" />
                        <path d="M3 14.500h19" stroke="#ddd" strokeWidth="1.500" />
                        <path d="M2 18.500h20V23H0z" fill="#f08a24" stroke="#b35c0c" strokeWidth=".8" />
                    </Ico>
                    <Ico s={17}>
                        <path d="M4 16L16 3l5 5L8 20z" fill="#3c3c3c" stroke="#1a1a1a" />
                        <path d="M4 16l4 4-7 3z" fill="#eadc7a" stroke="#333" />
                        <path d="M16 3c3-5 10 1 5 5z" fill="#e28bd2" stroke="#9a4f8c" />
                    </Ico>
                    <svg width="6" height="4">
                        <path d="M.5.5h5L3 3.500z" fill="#000" />
                    </svg>
                </div>
            </div>
            <div className="flex flex-col px-[3px]">
                <StyleList />
                <div className="flex h-[31px] items-center pt-1 pb-px">
                    <div className="flex h-[13px] w-[13px] items-center justify-center border border-[#333] bg-white">
                        <svg width="9" height="8" fill="none">
                            <path d="M.5 4l2.500 2.500L8.500 1" stroke="#333" strokeWidth="1.200" />
                        </svg>
                    </div>
                    <Fit w={139} className="ml-1 text-[15px] text-black">Vorschauen anzeigen</Fit>
                </div>
                <Combo value="Hierarchisch" tw={81} className="w-[253px] pl-px" dark />
            </div>
        </div>
    );
}

function TabBar() {
    return (
        <div className="mt-[3px] flex flex-1 flex-col items-center pr-[1px]">
            <div className="flex h-8 items-center">
                <Ico>
                    <path
                        d="M10 1.500h4l.7 2.500 2.300 1 2.500-1.300 2.500 2.800-1.200 2.500.7 2.300 2 .8v3l-2.500 1-.8 2 1 2.500-2.700 2.400-2.500-1-2 1-.8 2h-3.500l-1-2-2.200-1-2.500 1L2.500 17l1-2.300-1-2L.5 12V9l2.300-.8.800-2L2.500 4 5 1.800 7.500 3l1.800-.8z"
                        fill="#dedede"
                        stroke="#8f8f8f"
                    />
                    <circle cx="12" cy="11.500" r="5" fill="#eee" stroke="#9a9a9a" />
                    <circle cx="12" cy="11.500" r="2.500" fill="#fff" stroke="#9a9a9a" />
                </Ico>
            </div>
            <div className="mt-[4px] h-px w-[23px] bg-[#d0d0d0]" />
            <div className="mt-[2px] flex h-[34px] items-center">
                <Ico>
                    <rect x="2.500" y="2.500" width="19" height="19" fill="url(#sheet)" stroke="#8f8f8f" />
                    <rect x="5" y="8.500" width="14" height="7" rx="3.500" fill="#3f94ea" />
                    <circle cx="15.500" cy="12" r="3" fill="#fff" stroke="#2a6fc0" strokeWidth=".7" />
                </Ico>
            </div>
            <div className="flex h-[37px] items-center pb-px">
                <Ico>
                    <Sheet x={3} y={1} w={18} h={22} />
                </Ico>
            </div>
            <div className="flex h-8 w-8 items-center justify-center rounded-[3px] border border-[#adadad] bg-[#f4f4f4]">
                <Ico>
                    <Letter x={0} y={17} size={22}>A</Letter>
                    <Brush x={0} y={2} />
                </Ico>
            </div>
            <div className="mt-[7px] flex h-6 items-center">
                <Ico>
                    <path d="M3 2l17 2-2 15L1 16z" fill="#e9e9e9" stroke="#999" />
                    <path d="M3 4l-1 10" stroke="#3fa8dc" strokeWidth="2" />
                    <rect x="3.500" y="5.500" width="19" height="15" fill="#fff" stroke="#8a8a8a" />
                    <rect x="5" y="7" width="16" height="12" fill="url(#sky)" />
                    <path d="M9 13l1 2 2 .5-2 .8-1 1.700-1-1.700-2-.8 2-.5z" fill="#d84a16" />
                </Ico>
            </div>
            <div className="mt-[11px] flex h-6 items-center">
                <Ico>
                    <circle cx="12" cy="12" r="9.500" fill="#3b485a" stroke="#a5a5a5" strokeWidth="2.500" />
                    <circle cx="12" cy="12" r="10.800" stroke="#6e6e6e" strokeWidth=".7" />
                    <path d="M12 5l1 4.500 4-3-2.500 4.500 4.500 1-4.500 1.500 2 4-4-2.500L11 19l-1-4.500-4 1.500 2.500-3L5 11h4.500z" fill="#dfe4ea" opacity=".85" />
                    <path d="M11.500 11l5.500-4.500-3 5.500zM12 5l.5 6-7-1.500z" fill="#e2383c" />
                </Ico>
            </div>
        </div>
    );
}

function Sidebar() {
    return (
        <div className="flex w-[312px] shrink-0 bg-[#f0f0f0]">
            <div className="flex h-[990px] w-[7px] shrink-0 flex-col border-x border-b border-[#a0a0a0]">
                <div className="mt-[459px] -mr-px -ml-px flex h-[73px] items-center justify-center bg-[#696969]">
                    <svg width="5" height="8">
                        <path d="M0 0l5 4-5 4z" fill="#f0f0f0" />
                    </svg>
                </div>
            </div>
            <div className="flex h-[990px] flex-1 border-t border-b border-t-white border-b-[#a0a0a0]">
                <div className="-mt-px flex flex-1">
                    <StylesDeck />
                    <TabBar />
                </div>
            </div>
        </div>
    );
}

/* ---------- status bar ---------- */

const Sep = () => <div className="h-[21px] w-px shrink-0 bg-[#a5a5a5]" />;

function StatusBar() {
    return (
        <footer className="flex h-[26px] shrink-0 items-center border-t border-[#a0a0a0] bg-[#f0f0f0] pt-0.5 text-[15px] text-black">
            <div className="w-[295px] pl-3">
                <Fit w={84}>Seite 1 von 1</Fit>
            </div>
            <Sep />
            <div className="w-[336px] pl-[10px]">
                <Fit w={123}>1 Wort, 18 Zeichen</Fit>
            </div>
            <Sep />
            <div className="w-[267px] pl-[10px]">
                <Fit w={59}>Standard</Fit>
            </div>
            <Sep />
            <div className="w-[357px] text-center">
                <Fit w={149}>Deutsch (Deutschland)</Fit>
            </div>
            <Sep />
            <div className="w-[69px]" />
            <Sep />
            <div className="flex w-[30px] justify-center">
                <svg width="17" height="13" fill="none">
                    <path d="M1 .5h5M3.500 .5v11M1 11.500h5M9.500 9v2.500h6V9" stroke="#8a8a8a" strokeWidth="1.200" />
                </svg>
            </div>
            <Sep />
            <div className="flex w-[30px] justify-center pb-[3px]">
                <svg width="13" height="11" fill="none">
                    <rect x=".5" y=".5" width="12" height="10" fill="#f8f8f8" stroke="#999" />
                    <path d="M5 2h3v3h2L6.500 9 3 5h2z" fill="#f39a1f" stroke="#cf6a00" />
                </svg>
            </div>
            <Sep />
            <div className="w-[30px]" />
            <Sep />
            <div className="w-[217px]" />
            <Sep />
            <div className="flex w-[77px] items-center pl-[13px]">
                <svg width="54" height="12" fill="none">
                    <path d="M.7 1h4.500l3 3v6.500H.7z" stroke="#d9620f" strokeWidth="1.400" />
                    <path d="M14.500 1h4l3 3v6.500h-7zM24.500 1h4l3 3v6.500h-7z" stroke="#909090" />
                    <path d="M46.500 1v9.500h-8V4l3-3h8l4 3v6.500h-7" stroke="#909090" />
                </svg>
            </div>
            <Sep />
            <div className="flex w-[144px] items-center pl-[9px]">
                <svg width="130" height="12" fill="none">
                    <path d="M0 6.500h9M119 6.500h9M123.500 2v9" stroke="#909090" />
                    <path d="M15 6.500h100" stroke="#6e6e6e" strokeWidth="1.300" />
                    <path d="M43 4v5" stroke="#555" strokeWidth="1.500" />
                    <circle cx="65" cy="6" r="4.500" fill="#f0f0f0" stroke="#909090" strokeWidth="1.200" />
                </svg>
            </div>
            <Sep />
            <Fit w={37} className="ml-[9px]">120 %</Fit>
        </footer>
    );
}

/* ---------- task bar ---------- */

function TaskButton({ icon, label, w, active, className }: { icon: ReactNode; label: string; w: number; active?: boolean; className: string }) {
    return (
        <div className={clsx("flex h-full shrink-0 items-center border-b-[3px] border-[#76b9ed] pt-[3px]", active && "bg-[#343434]", className)}>
            {icon}
            <Fit w={w}>{label}</Fit>
        </div>
    );
}

// Dark rocky wallpaper shining through the bar
function Rocks() {
    return (
        <svg width="1920" height="50" className="absolute inset-0" fill="none">
            <filter id="rock" x="0" y="0" width="100%" height="100%">
                <feTurbulence type="fractalNoise" baseFrequency=".035 .07" numOctaves="4" seed="8" />
                <feColorMatrix values="0 0 0 0 .22  0 0 0 0 .22  0 0 0 0 .23  2.600 0 0 0 -1.100" />
            </filter>
            <linearGradient id="fade" x1="0" x2="1">
                <stop offset=".6" stopColor="#050505" />
                <stop offset=".8" stopColor="#050505" stopOpacity=".55" />
                <stop offset="1" stopColor="#050505" stopOpacity=".3" />
            </linearGradient>
            <rect width="1920" height="50" filter="url(#rock)" />
            <rect width="1920" height="50" fill="url(#fade)" />
        </svg>
    );
}

function TaskBar() {
    return (
        <div className="relative h-[50px] shrink-0 bg-[#050505] text-[15px] text-white">
            <Rocks />
            <div className="relative flex h-full items-center">
                <svg width="20" height="20" className="ml-5">
                    <rect width="10" height="10" fill="#3f9ae8" />
                    <path d="M12 3h7v7h-7zM2 12h8v8H2zM12 12h6v6h-6z" fill="#f2f6fa" />
                </svg>
                <svg width="21" height="20" fill="none" className="ml-10">
                    <path d="M.5 1v4h12V1M.5 19v-4h12v4M1.500 6.500h10v7h-10zM18.500 0v5M18.500 11v8" stroke="#fff" strokeWidth="1.100" />
                    <rect x="17" y="6" width="3" height="3.500" fill="#fff" />
                </svg>
                <TaskButton
                    className="ml-7 w-[190px] pl-[13px]"
                    label="Datenkompression"
                    w={124}
                    icon={
                        <svg width="18" height="26" className="mr-[11px]">
                            <path d="M0 1h15v15l3 3v5H5z" fill="#f2cf63" />
                            <path d="M0 1l6 4v21l-6-4z" fill="#fce69a" />
                        </svg>
                    }
                />
                <TaskButton
                    className="ml-[11px] w-[190px] pl-2"
                    label="OpenOffice: Rand e..."
                    w={138}
                    icon={
                        <svg width="29" height="29" fill="none" className="mr-1">
                            <path
                                fillRule="evenodd"
                                d="M14.500.5a14 14 0 1 0 0 28 14 14 0 1 0 0-28zm0 3.500c4 0 6 4.500 6 10.500s-2 10.500-6 10.500-6-4.500-6-10.500 2-10.500 6-10.500z"
                                fill="url(#opera)"
                            />
                        </svg>
                    }
                />
                <TaskButton
                    active
                    className="ml-1.5 w-[200px] pl-4"
                    label="Unbenannt 2 - Libre..."
                    w={140}
                    icon={
                        <svg width="24" height="30" fill="none" className="mr-[6px]">
                            <path d="M1 1h14l8 8v20H1z" fill="#fff" stroke="#1681bd" strokeWidth="2" />
                            <path d="M15 0h8v8z" fill="#1681bd" />
                            <path d="M5 13.500h4M5 17h4M5 20.500h14M5 24h10" stroke="#1681bd" strokeWidth="1.500" />
                            <rect x="11" y="12" width="8" height="6" fill="#2f94cc" />
                        </svg>
                    }
                />
                <div className="ml-[723px] flex w-[107px] flex-col text-[13px] leading-4">
                    <div className="flex justify-between">
                        <Fit w={12}>U:</Fit>
                        <Fit w={60}>2,44 kbit/s</Fit>
                    </div>
                    <div className="flex justify-between">
                        <Fit w={12}>D:</Fit>
                        <Fit w={60}>0,00 kbit/s</Fit>
                    </div>
                </div>
                <svg width="16" height="10" fill="none" className="ml-[9px]">
                    <path d="M1 9l7-7.500L15 9" stroke="#fff" strokeWidth="1.300" />
                </svg>
                <svg width="16" height="21" fill="none" className="ml-4">
                    <path d="M2.500 6V1.500h7V6M1.500 6.500h10v13h-10z" stroke="#fff" strokeWidth="1.100" />
                    <path d="M4 3h1.500v1.500H4zM7 3h1.500v1.500H7z" fill="#fff" />
                    <path d="M8 16l3 3.500 5-6" stroke="#bbb" strokeWidth="1.200" />
                </svg>
                <svg width="18" height="16" className="ml-[10px]">
                    <path d="M4.500 0L9 3 4.500 6 0 3zM13.500 0L18 3l-4.500 3L9 3zM4.500 6L9 9l-4.500 3L0 9zM13.500 6L18 9l-4.500 3L9 9zM4.500 13L9 10l4.500 3L9 16z" fill="#fff" />
                </svg>
                <svg width="20" height="14" className="ml-3">
                    <path d="M5 14a4.500 4.500 0 0 1-1-9C5-1 14-2 15.500 4.500 22 5 21 14 16 14z" fill="#fff" />
                    <path d="M10 4l4 4h-2.700v4H8.700V8H6z" fill="#050505" />
                </svg>
                <svg width="20" height="20" fill="none" className="ml-2.5">
                    <rect width="20" height="20" rx="1" fill="#e0131a" />
                    <path d="M3.500 12C3.500 4 14 3.500 14.500 12.500c-1.500-1.500-3-1.500-4.500-.5-2-1.500-4.500-1.500-6.500 0z" fill="#fff" />
                    <path d="M6 11c1-3 3.500-4 5.500-3" stroke="#e0131a" strokeWidth="1.300" />
                    <path d="M10.500 8C10 12 8.500 14.500 6 14.500M14.500 12c.3 1.500 1 2.500 2 2.500" stroke="#fff" strokeWidth="1.600" />
                </svg>
                <svg width="17" height="17" fill="none" className="ml-3">
                    <path d="M1 16C1 8 7 2 16 1.500M5 16c0-6 4-10 11-10.500M9 16c0-4 2-6.500 7-7" stroke="#ccc" strokeWidth="1.300" />
                    <circle cx="13.500" cy="14" r="2" fill="#fff" />
                </svg>
                <svg width="20" height="16" fill="none" className="ml-2.5">
                    <path d="M1 5.500h2.500l4-4v13l-4-4H1z" stroke="#fff" strokeWidth="1.100" />
                    <path d="M10 5.500c1 1.500 1 3.500 0 5M12.500 3.500c2.500 2.500 2.500 6.500 0 9" stroke="#fff" />
                    <path d="M15.500 1c4 4 4 10 0 14" stroke="#888" />
                </svg>
                <div className="ml-[13px] flex w-[71px] flex-col items-center leading-[23px]">
                    <Fit w={35}>22:17</Fit>
                    <Fit w={70}>30.04.2019</Fit>
                </div>
                <div className="relative ml-[22px] h-[20px] w-[20px]">
                    <svg width="20" height="20">
                        <path d="M0 0h20v16h-9l-4 4v-4H0z" fill="#fff" />
                        <path d="M4 4.500h12M4 8h12M4 11.500h8" stroke="#111" strokeWidth="1.300" />
                    </svg>
                    <div className="absolute top-[9px] left-[9px] flex h-[21px] w-[21px] items-center justify-center rounded-full border border-[#8a8a8a] bg-[#2c2c2c] text-[15px] font-bold">
                        4
                    </div>
                </div>
                <div className="ml-auto mr-[5px] h-full w-px bg-[#3a3a3a]" />
            </div>
        </div>
    );
}

export default function App() {
    return (
        <div className="flex h-[1200px] w-[1920px] flex-col overflow-hidden bg-[#f0f0f0] font-['Open_Sans','Noto_Sans',sans-serif]">
            <Defs />
            <Header />
            <main className="flex h-[991px] shrink-0">
                <Document />
                <ScrollBar />
                <Sidebar />
            </main>
            <StatusBar />
            <TaskBar />
        </div>
    );
}
